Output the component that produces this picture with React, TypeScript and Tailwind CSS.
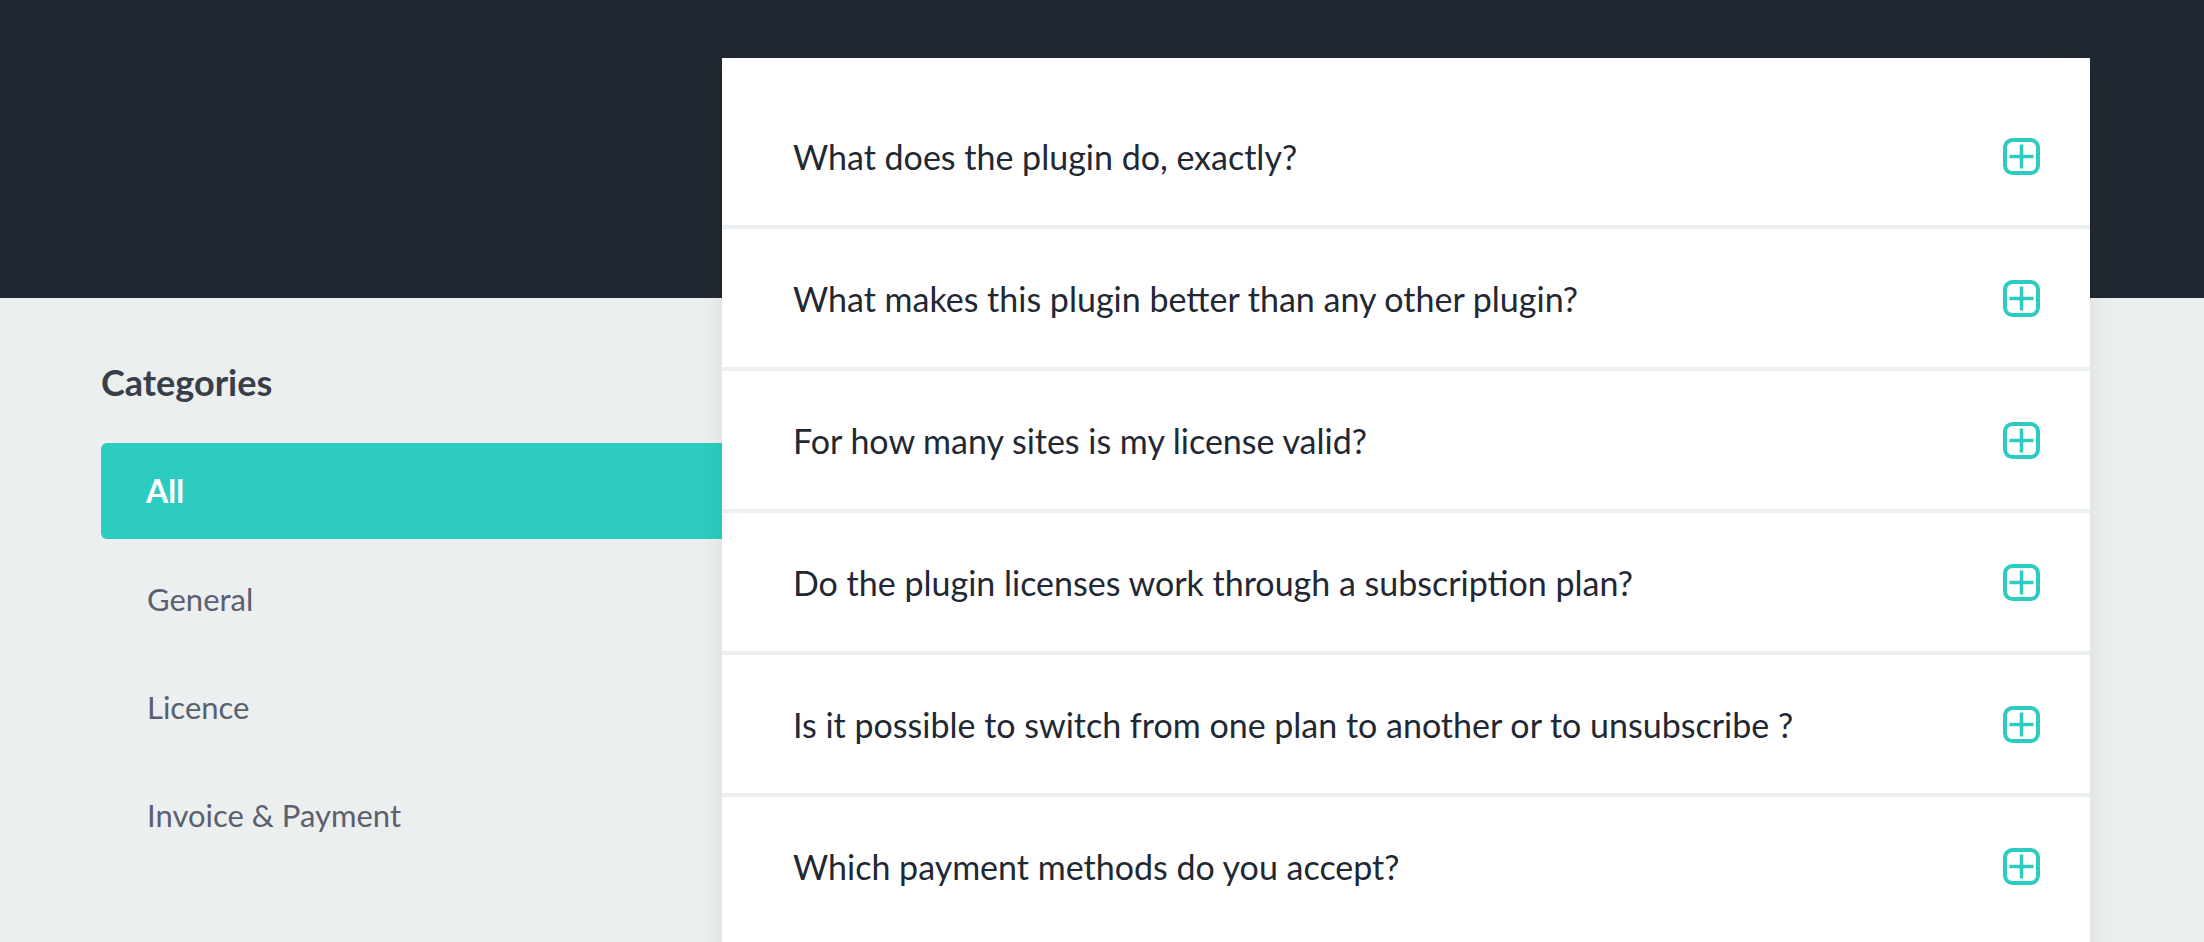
import React from "react";

const questions = [
  "What does the plugin do, exactly?",
  "What makes this plugin better than any other plugin?",
  "For how many sites is my license valid?",
  "Do the plugin licenses work through a subscription plan?",
  "Is it possible to switch from one plan to another or to unsubscribe ?",
  "Which payment methods do you accept?",
];

const categories = ["All", "General", "Licence", "Invoice & Payment"];

function PlusSquare() {
  return (
    <svg width="37" height="37" viewBox="0 0 37 37" fill="none" className="shrink-0">
      <rect x="2" y="2" width="33" height="33" rx="7.5" stroke="#2ccdc0" strokeWidth="4" />
      <line x1="6.5" y1="18.5" x2="30.5" y2="18.5" stroke="#2ccdc0" strokeWidth="3.5" />
      <line x1="18.5" y1="6.5" x2="18.5" y2="30.5" stroke="#2ccdc0" strokeWidth="3.5" />
    </svg>
  );
}

export default function App() {
  return (
    <div
      className="h-[942px] w-full overflow-hidden bg-[linear-gradient(to_bottom,#222831_0px,#222831_298px,#ebeff0_298px,#ebeff0_100%)]"
      style={{ fontFamily: "Lato, 'Noto Sans', sans-serif" }}
    >
      <div className="flex pl-[101px] pr-[114px] pt-[58px]">
        <aside className="w-[621px] shrink-0 pt-[303px]">
          <h2 className="mb-[40px] text-[36px] font-bold leading-[42px] text-[#393f48]">Categories</h2>
          <ul className="flex flex-col gap-[12px]">
            {categories.map((c, i) => (
              <li
                key={c}
                className={
                  i === 0
                    ? "flex h-[96px] items-center rounded-l-[6px] bg-[#2ccdc0] pl-[45px] text-[32px] font-bold text-white"
                    : "flex h-[96px] items-center pl-[46px] text-[31px] text-[#5a606d]"
                }
              >
                {c}
              </li>
            ))}
          </ul>
        </aside>
        <main className="flex-1 bg-white pb-[40px] pt-[29px] shadow-[0_0_24px_rgba(0,0,0,0.08)]">
          {questions.map((q) => (
            <div
              key={q}
              className="flex h-[142px] items-center justify-between border-b-4 border-[#ebeff0] pl-[71px] pr-[50px] last:h-[138px] last:border-b-0"
            >
              <span className="text-[34px] text-[#222833]">{q}</span>
              <PlusSquare />
            </div>
          ))}
        </main>
      </div>
    </div>
  );
}
